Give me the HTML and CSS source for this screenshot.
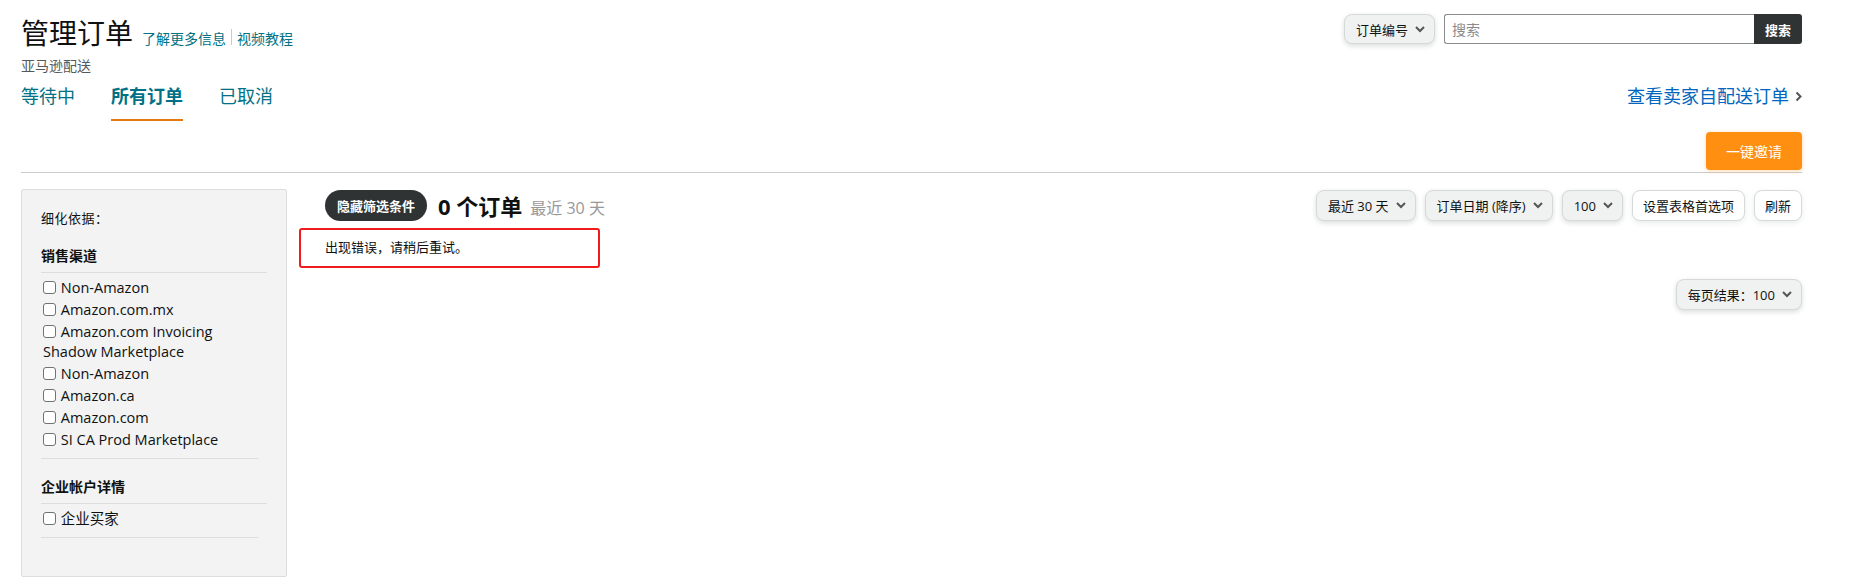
FILE: index.html
```html
<!DOCTYPE html>
<html lang="zh-CN">
<head>
  <meta charset="UTF-8">
  <meta name="viewport" content="width=device-width, initial-scale=1.0">
  <title>管理订单</title>
  <link rel="stylesheet" href="styles.css">
</head>
<body>
  <div class="page">
    <div class="header">
      <div class="header-left">
        <div class="title-row">
          <h1 class="title">管理订单</h1>
          <a class="help-link" href="#">了解更多信息</a>
          <span class="sep"></span>
          <a class="help-link" href="#">视频教程</a>
        </div>
        <div class="subtitle">亚马逊配送</div>
      </div>
      <div class="search">
        <button class="select-btn">订单编号
          <svg class="chev" viewBox="0 0 10 7"><polyline points="1,1 5,5 9,1"/></svg>
        </button>
        <div class="search-box">
          <input class="search-input" type="text" placeholder="搜索">
          <button class="search-btn">搜索</button>
        </div>
      </div>
    </div>

    <div class="tabs-row">
      <div class="tabs">
        <a class="tab" href="#">等待中</a>
        <a class="tab active" href="#">所有订单</a>
        <a class="tab" href="#">已取消</a>
      </div>
      <a class="mfn-link" href="#">查看卖家自配送订单
        <svg class="chev-right" viewBox="0 0 7 11"><polyline points="1.5,1.5 5.5,5.5 1.5,9.5"/></svg>
      </a>
    </div>

    <div class="action-row">
      <button class="invite-btn">一键邀请</button>
    </div>

    <div class="content">
      <div class="sidebar">
        <div class="refine">细化依据：</div>

        <div class="facet">
          <div class="facet-title">销售渠道</div>
          <ul class="facet-list">
            <li><label><input type="checkbox"> Non-Amazon</label></li>
            <li><label><input type="checkbox"> Amazon.com.mx</label></li>
            <li><label><input type="checkbox"> Amazon.com Invoicing Shadow Marketplace</label></li>
            <li><label><input type="checkbox"> Non-Amazon</label></li>
            <li><label><input type="checkbox"> Amazon.ca</label></li>
            <li><label><input type="checkbox"> Amazon.com</label></li>
            <li><label><input type="checkbox"> SI CA Prod Marketplace</label></li>
          </ul>
        </div>

        <div class="facet">
          <div class="facet-title">企业帐户详情</div>
          <ul class="facet-list">
            <li><label><input type="checkbox"> 企业买家</label></li>
          </ul>
        </div>
      </div>

      <div class="main">
        <div class="toolbar">
          <div class="toolbar-left">
            <button class="pill-btn">隐藏筛选条件</button>
            <span class="count">0 个订单</span>
            <span class="range">最近 30 天</span>
          </div>
          <div class="toolbar-right">
            <button class="select-btn">最近 30 天
              <svg class="chev" viewBox="0 0 10 7"><polyline points="1,1 5,5 9,1"/></svg>
            </button>
            <button class="select-btn">订单日期 (降序)
              <svg class="chev" viewBox="0 0 10 7"><polyline points="1,1 5,5 9,1"/></svg>
            </button>
            <button class="select-btn">100
              <svg class="chev" viewBox="0 0 10 7"><polyline points="1,1 5,5 9,1"/></svg>
            </button>
            <button class="plain-btn">设置表格首选项</button>
            <button class="plain-btn">刷新</button>
          </div>
        </div>

        <div class="error-box">出现错误，请稍后重试。</div>

        <div class="per-page">
          <button class="select-btn">每页结果：100
            <svg class="chev" viewBox="0 0 10 7"><polyline points="1,1 5,5 9,1"/></svg>
          </button>
        </div>
      </div>
    </div>
  </div>
</body>
</html>
```

FILE: styles.css
```css
body {
  margin: 0;
  font-family: "Open Sans", "Noto Sans CJK SC", sans-serif;
  color: #0f1111;
  background: #fff;
}
a {
  text-decoration: none;
}
button {
  font-family: inherit;
  cursor: pointer;
  white-space: nowrap;
}
.page {
  padding: 14px 47px 0 21px;
}

/* header */
.header {
  display: flex;
  justify-content: space-between;
  align-items: flex-start;
}
.title-row {
  display: flex;
  align-items: baseline;
  height: 38px;
}
.title {
  margin: 0;
  font-size: 28px;
  font-weight: 400;
  line-height: 38px;
  margin-right: 9px;
}
.help-link {
  font-size: 14px;
  color: #007185;
}
.sep {
  display: inline-block;
  width: 1px;
  height: 16px;
  background: #ccc;
  margin: 0 5px;
  align-self: center;
  position: relative;
  top: 4px;
}
.subtitle {
  font-size: 14px;
  color: #565959;
  line-height: 18px;
  margin-top: 5px;
}
.search {
  display: flex;
  align-items: center;
  gap: 9px;
}
.select-btn {
  display: inline-flex;
  align-items: center;
  gap: 7px;
  height: 31px;
  padding: 0 9px 0 11px;
  font-size: 13px;
  color: #0f1111;
  background: #f0f2f2;
  border: 1px solid #d5d9d9;
  border-radius: 8px;
  box-shadow: 0 2px 5px rgba(15, 17, 17, 0.15);
}
.search .select-btn {
  height: 30px;
}
.chev {
  width: 10px;
  height: 7px;
  fill: none;
  stroke: #555;
  stroke-width: 2;
}
.search-box {
  display: flex;
}
.search-input {
  width: 310px;
  height: 30px;
  box-sizing: border-box;
  border: 1px solid #888c8c;
  border-right: none;
  border-radius: 3px 0 0 3px;
  padding: 0 7px;
  font-size: 14px;
  font-family: inherit;
}
.search-input::placeholder {
  color: #8a8a8a;
}
.search-btn {
  width: 48px;
  height: 30px;
  border: none;
  border-radius: 0 3px 3px 0;
  background: #303333;
  color: #fff;
  font-size: 13px;
  font-weight: 700;
}

/* tabs */
.tabs-row {
  display: flex;
  justify-content: space-between;
  align-items: flex-start;
  margin-top: 9px;
}
.tabs {
  display: flex;
  gap: 36px;
}
.tab {
  font-size: 18px;
  line-height: 24px;
  color: #007185;
  padding-bottom: 11px;
  border-bottom: 2px solid transparent;
}
.tab.active {
  font-weight: 700;
  border-bottom-color: #e47911;
}
.mfn-link {
  display: flex;
  align-items: center;
  gap: 6px;
  font-size: 18px;
  line-height: 24px;
  color: #0066c0;
}
.chev-right {
  width: 7px;
  height: 11px;
  fill: none;
  stroke: #555;
  stroke-width: 2;
}

/* invite */
.action-row {
  display: flex;
  justify-content: flex-end;
  margin-top: 11px;
  border-bottom: 1px solid #ccc;
  padding-bottom: 2px;
}
.invite-btn {
  width: 96px;
  height: 38px;
  border: none;
  border-radius: 4px;
  background: #ff8f11;
  color: #fff;
  font-size: 14px;
  box-shadow: 0 1px 4px rgba(255, 143, 17, 0.35);
}

/* content */
.content {
  display: flex;
  gap: 12px;
  margin-top: 16px;
}
.sidebar {
  width: 266px;
  box-sizing: border-box;
  height: 388px;
  padding: 18px 19px;
  background: #f3f3f3;
  border: 1px solid #ddd;
  border-radius: 2px;
}
.refine {
  font-size: 13px;
  line-height: 20px;
  letter-spacing: 0.5px;
}
.facet {
  margin-top: 18px;
}
.facet-title {
  font-size: 14px;
  font-weight: 700;
  line-height: 20px;
  padding-bottom: 6px;
  border-bottom: 1px solid #ddd;
}
.facet-list {
  list-style: none;
  margin: 0;
  padding: 5px 0 8px 2px;
  border-bottom: 1px solid #ddd;
  width: 215px;
}
.facet-list li {
  font-size: 14.5px;
  line-height: 20px;
  margin-bottom: 2px;
}
.facet-list li:last-child {
  margin-bottom: 0;
}
.facet-list input {
  appearance: none;
  width: 13px;
  height: 13px;
  margin: 0 1px 0 0;
  border: 1px solid #6f7373;
  border-radius: 3px;
  background: #fff;
  vertical-align: -1px;
}

/* main */
.main {
  flex: 1;
}
.toolbar {
  display: flex;
  justify-content: space-between;
  align-items: center;
  padding-left: 26px;
}
.toolbar-left {
  display: flex;
  align-items: center;
}
.pill-btn {
  height: 31px;
  padding: 0 12px;
  border: none;
  border-radius: 16px;
  background: #303333;
  color: #fff;
  font-size: 13px;
  font-weight: 700;
}
.count {
  margin-left: 11px;
  font-size: 22px;
  font-weight: 700;
}
.range {
  margin-left: 8px;
  font-size: 16px;
  color: #999;
  position: relative;
  top: 2px;
}
.toolbar-right {
  display: flex;
  gap: 9px;
  margin-top: 1px;
}
.plain-btn {
  height: 31px;
  padding: 0 10px;
  font-size: 13px;
  color: #0f1111;
  background: #fff;
  border: 1px solid #d5d9d9;
  border-radius: 8px;
  box-shadow: 0 2px 5px rgba(213, 217, 217, 0.5);
}
.error-box {
  width: 301px;
  height: 40px;
  box-sizing: border-box;
  margin-top: 7px;
  padding-left: 24px;
  border: 2px solid #f01b1b;
  border-radius: 3px;
  font-size: 13px;
  line-height: 34px;
}
.per-page {
  display: flex;
  justify-content: flex-end;
  margin-top: 11px;
}
```
